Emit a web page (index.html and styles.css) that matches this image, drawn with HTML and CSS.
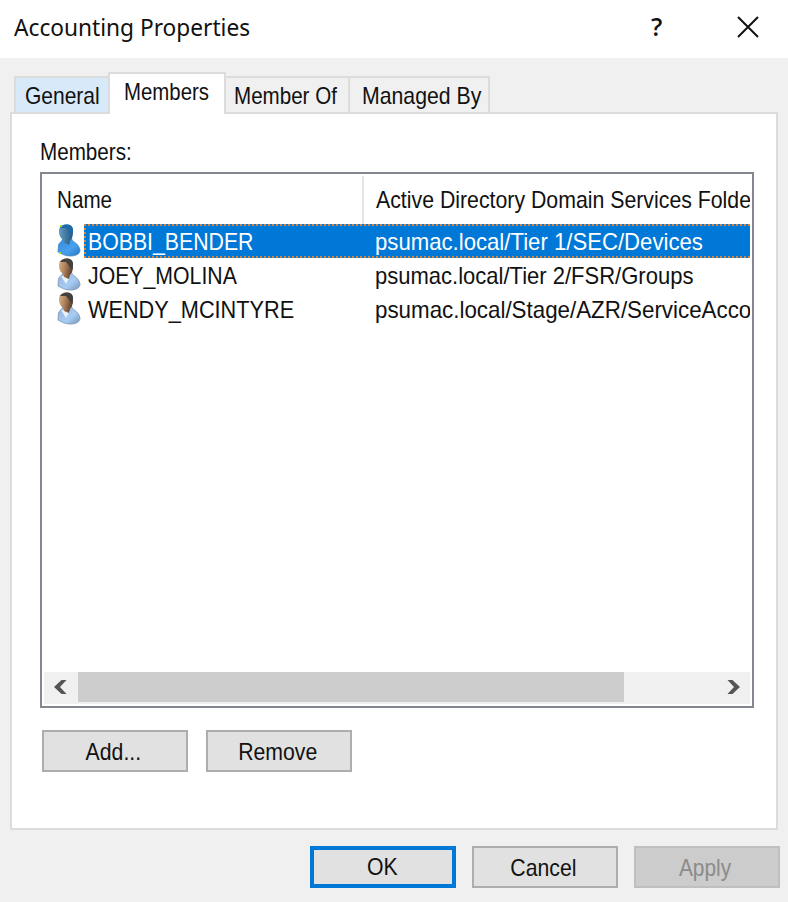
FILE: index.html
```html
<!DOCTYPE html>
<html lang="en">
<head>
<meta charset="utf-8">
<title>Accounting Properties</title>
<link rel="stylesheet" href="styles.css">
</head>
<body>
<svg class="defs" width="0" height="0" aria-hidden="true">
  <defs>
    <linearGradient id="face" x1="0" x2="1" y1="0" y2="0.3"><stop offset="0" stop-color="#dcb68a"/><stop offset=".5" stop-color="#b0825a"/><stop offset="1" stop-color="#5d4330"/></linearGradient>
    <linearGradient id="shirt" x1="0" x2="1" y1="0" y2="1"><stop offset="0" stop-color="#8fb0d6"/><stop offset=".6" stop-color="#a8cdf5"/><stop offset="1" stop-color="#7795b8"/></linearGradient>
    <linearGradient id="faceSel" x1="0" x2="1"><stop offset="0" stop-color="#639bc4"/><stop offset=".55" stop-color="#3f759e"/><stop offset="1" stop-color="#1c568a"/></linearGradient>
    <linearGradient id="shirtSel" x1="0" x2="1" y1="0" y2="1"><stop offset="0" stop-color="#2d8ade"/><stop offset=".6" stop-color="#49a0ed"/><stop offset="1" stop-color="#2475c4"/></linearGradient>
  </defs>
</svg>
<main class="dialog">
  <header class="titlebar">
    <h1 class="title"><span class="t t-title">Accounting Properties</span></h1>
    <span class="help">?</span>
    <svg class="close" width="22" height="22" viewBox="0 0 22 22"><path d="M1 1 21 21M21 1 1 21" stroke="#111" stroke-width="2" fill="none"/></svg>
  </header>

  <nav class="tabs">
    <div class="tab tab-general"><span class="t t-general">General</span></div>
    <div class="tab tab-members"><span class="t t-members">Members</span></div>
    <div class="tab tab-memberof"><span class="t t-memberof">Member Of</span></div>
    <div class="tab tab-managed"><span class="t t-managed">Managed By</span></div>
  </nav>

  <section class="panel">
    <div class="label"><span class="t t-label">Members:</span></div>
    <div class="list">
      <div class="row head">
        <div class="name"><span class="t t-name">Name</span></div>
        <div class="folder"><span class="t t-folder">Active Directory Domain Services Folder</span></div>
      </div>
      <div class="row item">
        <svg class="user" width="24" height="34" viewBox="0 0 24 34"><path d="M1 28L1.500 21C3 18 5 17 6 15L14.500 13C14 19 21 17 23 26C23 30 19 32 13 32C8 32 5 30 1 28Z" fill="url(#shirtSel)" stroke="#3f7cb4" stroke-width=".7"/><path d="M2 7C2 3 5 .5 9 .5C14 .5 16 3 16 7C16 12 15 15 13 17L12 21L7 19C7 17 6 16 5 15C3 13 2 11 2 7Z" fill="url(#faceSel)"/><path d="M3 4C6-1 16-1 16 6L15.500 11C13 9 12 6 9 4Z" fill="#1c6aa9"/><path d="M3 2H5M2 29H4" stroke="#9be51b" stroke-width="2"/></svg>
        <div class="cells selection">
          <div class="name"><span class="t t-bobbi">BOBBI_BENDER</span></div>
          <div class="folder"><span class="t t-path1">psumac.local/Tier 1/SEC/Devices</span></div>
        </div>
      </div>
      <div class="row item">
        <svg class="user" width="24" height="34" viewBox="0 0 24 34"><path d="M1 28L1.500 21C3 18 5 17 6 15L14.500 13C14 19 21 17 23 26C23 30 19 32 13 32C8 32 5 30 1 28Z" fill="url(#shirt)" stroke="#819bb8" stroke-width=".9"/><path d="M4 18 9 26 13 19Z" fill="#e8f2fb"/><path d="M2 7C2 3 5 .5 9 .5C14 .5 16 3 16 7C16 12 15 15 13 17L12 21L7 19C7 17 6 16 5 15C3 13 2 11 2 7Z" fill="url(#face)"/><path d="M3 4C6-1 16-1 16 6L15.500 12C13 10 12 7 9 4Z" fill="#43413f"/></svg>
        <div class="cells">
          <div class="name"><span class="t t-joey">JOEY_MOLINA</span></div>
          <div class="folder"><span class="t t-path2">psumac.local/Tier 2/FSR/Groups</span></div>
        </div>
      </div>
      <div class="row item">
        <svg class="user" width="24" height="34" viewBox="0 0 24 34"><path d="M1 28L1.500 21C3 18 5 17 6 15L14.500 13C14 19 21 17 23 26C23 30 19 32 13 32C8 32 5 30 1 28Z" fill="url(#shirt)" stroke="#819bb8" stroke-width=".9"/><path d="M4 18 9 26 13 19Z" fill="#e8f2fb"/><path d="M2 7C2 3 5 .5 9 .5C14 .5 16 3 16 7C16 12 15 15 13 17L12 21L7 19C7 17 6 16 5 15C3 13 2 11 2 7Z" fill="url(#face)"/><path d="M3 4C6-1 16-1 16 6L15.500 12C13 10 12 7 9 4Z" fill="#43413f"/></svg>
        <div class="cells">
          <div class="name"><span class="t t-wendy">WENDY_MCINTYRE</span></div>
          <div class="folder"><span class="t t-path3">psumac.local/Stage/AZR/ServiceAcco</span></div>
        </div>
      </div>
      <div class="scrollbar">
        <svg class="arrow" width="34" height="31" viewBox="0 0 34 31"><path d="M17.500 8H22.500L16 15L22.500 22H17.500L10 15Z" fill="#555"/></svg>
        <div class="thumb"></div>
        <svg class="arrow" width="34" height="31" viewBox="0 0 34 31"><path d="M16.500 8H11.500L18 15L11.500 22H16.500L24 15Z" fill="#555"/></svg>
      </div>
    </div>
    <div class="actions">
      <button class="btn"><span class="t t-add">Add...</span></button>
      <button class="btn"><span class="t t-remove">Remove</span></button>
    </div>
  </section>

  <footer class="footer">
    <button class="btn default"><span class="t t-ok">OK</span></button>
    <button class="btn"><span class="t t-cancel">Cancel</span></button>
    <button class="btn" disabled><span class="t t-apply">Apply</span></button>
  </footer>
</main>
</body>
</html>
```
FILE: styles.css
```css
* { box-sizing: border-box; }
body { margin: 0; font: 24px/34px "Liberation Sans", Arial, sans-serif; color: #111; }
.defs { position: absolute; }
.dialog { width: 788px; height: 902px; background: #f0f0f0; overflow: hidden; }

.titlebar { display: flex; height: 58px; padding-left: 14px; background: #fff; }
.title { width: 636px; margin: 0; padding-top: 10px; font: 400 24px/34px "Noto Sans", sans-serif; }
.help { width: 87px; padding: 9px 0 0 1px; font: 600 25px/34px "Open Sans", sans-serif; }
.close { margin-top: 16px; }

.t { display: inline-block; white-space: nowrap; transform-origin: left center; }
.t-title { transform: scaleX(.945); }
.t-general { transform: scaleX(.875); }
.t-members { transform: scaleX(.85); }
.t-memberof { transform: scaleX(.857); }
.t-managed { transform: scaleX(.885); }
.t-label { transform: scaleX(.86); }
.t-name { transform: scaleX(.86); }
.t-folder { transform: scaleX(.887); }
.t-bobbi { transform: scaleX(.886); }
.t-joey { transform: scaleX(.886); }
.t-wendy { transform: scaleX(.904); }
.t-path1 { transform: scaleX(.923); }
.t-path2 { transform: scaleX(.917); }
.t-path3 { transform: scaleX(.931); }

.tabs { display: flex; align-items: flex-end; height: 54px; padding: 0 0 0 14px; }
.tab { height: 36px; padding: 1px 0 0 9px; border: 2px solid #dcdcdc; border-bottom: 0; border-left: 0; }
.tab-general { width: 94px; border-left: 2px solid #dcdcdc; border-right: 0; background: #d8eaf9; }
.tab-members { position: relative; width: 118px; height: 42px; margin-bottom: -2px; padding-left: 14px; border-left: 2px solid #dcdcdc; background: #fff; }
.tab-memberof { width: 124px; padding-left: 8px; }
.tab-managed { width: 140px; padding-left: 12px; }

.panel { width: 768px; height: 718px; margin-left: 10px; padding: 21px 22px 0 28px; border: 2px solid #dcdcdc; background: #fff; }
.label { height: 37px; }
.list { display: flex; flex-direction: column; width: 714px; height: 536px; border: 2px solid #828790; padding: 0 2px; }
.row { display: flex; height: 34px; overflow: hidden; }
.name { flex: none; }
.head { height: 48px; margin-top: 2px; }
.head .name { width: 320px; padding: 7px 0 0 13px; border-right: 2px solid #e5e5e5; }
.head .folder { padding: 7px 0 0 12px; }
.user { flex: none; width: 24px; margin: 0 3px 0 13px; }
.cells { display: flex; width: 666px; padding-top: 1px; overflow: hidden; }
.item .name { width: 291px; padding-left: 4px; }
.selection { position: relative; background: #0078d7; color: #fff; }
.selection::after { content: ""; position: absolute; inset: 0; border: 2px dotted #d8843c; border-right: 0; }

.scrollbar { display: flex; width: 706px; height: 32px; margin: auto 0 2px; background: #f0f0f0; }
.thumb { width: 546px; height: 30px; margin-right: auto; background: #cdcdcd; }

.actions { display: flex; gap: 18px; padding: 22px 0 0 2px; }
.btn { width: 146px; height: 42px; padding: 2px 3px 0 0; border: 2px solid #adadad; border-radius: 0; background: #e1e1e1; color: #111; font: inherit; }
.btn .t { transform-origin: center; transform: scaleX(.885); }
.btn .t-apply { transform: scaleX(.87); }
.btn:disabled { border-color: #bfbfbf; background: #ccc; color: #8b8b8b; }
.default { padding: 0 1px 0 0; border: 4px solid #0078d7; line-height: 32px; }
.footer { display: flex; justify-content: flex-end; gap: 16px; padding: 16px 8px 0 0; }
```
